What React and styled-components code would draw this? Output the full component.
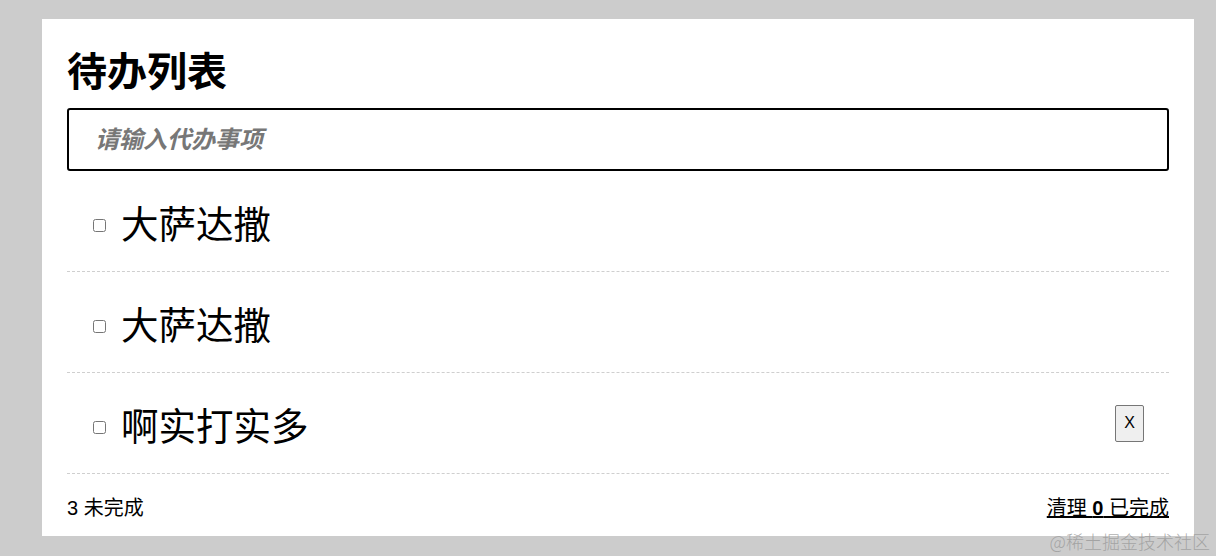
import React from 'react'
import styled, { createGlobalStyle } from 'styled-components'

const GlobalStyle = createGlobalStyle`
  body {
    margin: 0;
    background: #cccccc;
    font-family: 'Liberation Sans', 'Noto Sans CJK SC', sans-serif;
  }
`

const Card = styled.div`
  box-sizing: border-box;
  width: 1152px;
  height: 517px;
  margin: 19px 0 0 42px;
  padding: 0 25px;
  background: #fff;
  display: flex;
  flex-direction: column;
`

const Title = styled.h1`
  margin: 29px 0 12px;
  font-size: 40px;
  line-height: 48px;
  font-weight: 700;
  color: #000;
`

const NewTodo = styled.input`
  box-sizing: border-box;
  width: 100%;
  height: 63px;
  padding: 0 26px;
  border: 2px solid #000;
  border-radius: 3px;
  font-family: inherit;
  font-size: 24px;
  font-weight: 700;
  font-style: italic;
  outline: none;
  &::placeholder {
    color: #777;
  }
`

const List = styled.ul`
  list-style: none;
  margin: 0;
  padding: 0;
`

const Row = styled.li`
  display: flex;
  align-items: center;
  height: 100px;
  padding: 0 25px 0 26px;
  border-bottom: 1px dashed #cfcfcf;
`

const Check = styled.input`
  width: 13px;
  height: 13px;
  margin: 9px 15px 0 0;
`

const Label = styled.span`
  flex: 1;
  font-size: 37.5px;
  color: #000;
`

const Remove = styled.button`
  width: 29px;
  height: 37px;
  padding: 0;
  font-family: inherit;
  font-size: 16px;
  background: #efefef;
  border: 1px solid #767676;
  border-radius: 2px;
  color: #000;
`

const Footer = styled.div`
  flex: 1;
  display: flex;
  justify-content: space-between;
  align-items: center;
  padding-top: 2px;
  font-size: 20px;
  color: #000;
`

const Clear = styled.span`
  text-decoration: underline;
  b {
    font-weight: 700;
  }
`

const Watermark = styled.div`
  position: absolute;
  right: 6px;
  top: 528px;
  font-family: 'Noto Sans CJK SC', sans-serif;
  font-size: 18px;
  color: rgba(150, 150, 150, 0.75);
  font-weight: 300;
`

const todos = [
  { text: '大萨达撒', remove: false },
  { text: '大萨达撒', remove: false },
  { text: '啊实打实多', remove: true }
]

const App = () => (
  <>
    <GlobalStyle />
    <Card>
      <Title>待办列表</Title>
      <NewTodo placeholder='请输入代办事项' />
      <List>
        {todos.map((t, i) => (
          <Row key={i}>
            <Check type='checkbox' />
            <Label>{t.text}</Label>
            {t.remove && <Remove>X</Remove>}
          </Row>
        ))}
      </List>
      <Footer>
        <span>3 未完成</span>
        <Clear>清理 <b>0</b> 已完成</Clear>
      </Footer>
    </Card>
    <Watermark>@稀土掘金技术社区</Watermark>
  </>
)

export default App
